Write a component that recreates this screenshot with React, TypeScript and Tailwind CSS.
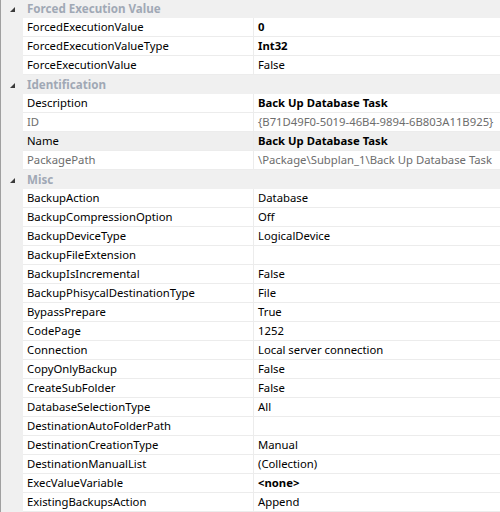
type Prop = { name: string; value: string; bold?: boolean; dim?: boolean; selected?: boolean };
type Group = { title: string; props: Prop[] };

const groups: Group[] = [
  {
    title: "Forced Execution Value",
    props: [
      { name: "ForcedExecutionValue", value: "0", bold: true },
      { name: "ForcedExecutionValueType", value: "Int32", bold: true },
      { name: "ForceExecutionValue", value: "False" },
    ],
  },
  {
    title: "Identification",
    props: [
      { name: "Description", value: "Back Up Database Task", bold: true },
      { name: "ID", value: "{B71D49F0-5019-46B4-9894-6B803A11B925}", dim: true },
      { name: "Name", value: "Back Up Database Task", bold: true, selected: true },
      { name: "PackagePath", value: "\\Package\\Subplan_1\\Back Up Database Task", dim: true },
    ],
  },
  {
    title: "Misc",
    props: [
      { name: "BackupAction", value: "Database" },
      { name: "BackupCompressionOption", value: "Off" },
      { name: "BackupDeviceType", value: "LogicalDevice" },
      { name: "BackupFileExtension", value: "" },
      { name: "BackupIsIncremental", value: "False" },
      { name: "BackupPhisycalDestinationType", value: "File" },
      { name: "BypassPrepare", value: "True" },
      { name: "CodePage", value: "1252" },
      { name: "Connection", value: "Local server connection" },
      { name: "CopyOnlyBackup", value: "False" },
      { name: "CreateSubFolder", value: "False" },
      { name: "DatabaseSelectionType", value: "All" },
      { name: "DestinationAutoFolderPath", value: "" },
      { name: "DestinationCreationType", value: "Manual" },
      { name: "DestinationManualList", value: "(Collection)" },
      { name: "ExecValueVariable", value: "<none>", bold: true },
      { name: "ExistingBackupsAction", value: "Append" },
    ],
  },
];

function Expander() {
  return (
    <svg width="22" height="18" viewBox="0 0 22 18" className="shrink-0">
      <polygon points="14,7 14,12 9,12" fill="#3b3b3b" />
    </svg>
  );
}

function GroupHeader({ title, first }: { title: string; first?: boolean }) {
  return (
    <div className={`flex items-start bg-[#f0f0f0] ${first ? "h-[18px]" : "h-[19px] pt-px"}`}>
      <Expander />
      <span className="pl-[4px] font-bold text-[#a0a8b5] text-[11.6px] leading-[17px] whitespace-nowrap">{title}</span>
    </div>
  );
}

function PropRow({ p }: { p: Prop }) {
  const bg = p.selected ? "bg-[#efefef]" : "bg-white";
  const color = p.dim ? "text-[#6d6d6d]" : "text-black";
  return (
    <div className="flex h-[19px]">
      <div className="w-[22px] shrink-0 bg-[#f0f0f0]" />
      <div className={`flex flex-1 border-b border-[#ececec] ${bg}`}>
        <div className={`w-[231px] shrink-0 pl-[4px] pt-px leading-[16px] whitespace-nowrap overflow-hidden border-r border-[#ececec] ${color}`}>
          {p.name}
        </div>
        <div className={`flex-1 pl-[4px] pt-px leading-[16px] whitespace-nowrap overflow-hidden ${color} ${p.bold ? "font-bold" : ""}`}>
          {p.value}
        </div>
      </div>
    </div>
  );
}

export default function App() {
  return (
    <div className="w-[500px] h-[512px] overflow-hidden bg-[#f0f0f0] border-l border-[#a0a0a0] text-[11.3px] font-['Noto_Sans',sans-serif]">
      {groups.map((g, i) => (
        <div key={g.title}>
          <GroupHeader title={g.title} first={i === 0} />
          {g.props.map((p) => (
            <PropRow key={p.name} p={p} />
          ))}
        </div>
      ))}
    </div>
  );
}
